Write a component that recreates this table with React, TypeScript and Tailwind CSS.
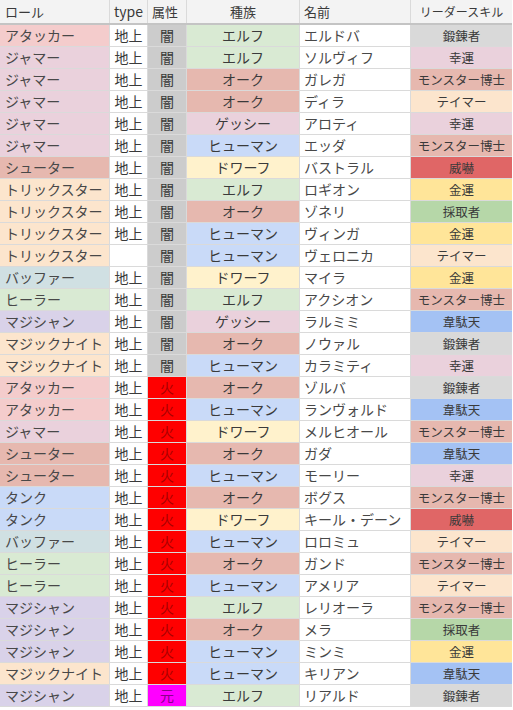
import React from "react";

const roleBg: Record<string, string> = {
  "アタッカー": "bg-[#f4cccc]",
  "ジャマー": "bg-[#ead1dc]",
  "シューター": "bg-[#e6b8af]",
  "トリックスター": "bg-[#fce5cd]",
  "バッファー": "bg-[#d0e0e3]",
  "ヒーラー": "bg-[#d9ead3]",
  "マジシャン": "bg-[#d9d2e9]",
  "マジックナイト": "bg-[#fce5cd]",
  "タンク": "bg-[#c9daf8]",
};

const attrCls: Record<string, string> = {
  "闇": "bg-[#cccccc] text-[#3a3a3a]",
  "火": "bg-[#ff0000] text-[#a80000]",
  "元": "bg-[#ff00ff] text-[#8a008a]",
};

const raceBg: Record<string, string> = {
  "エルフ": "bg-[#d9ead3]",
  "オーク": "bg-[#e6b8af]",
  "ゲッシー": "bg-[#ead1dc]",
  "ヒューマン": "bg-[#c9daf8]",
  "ドワーフ": "bg-[#fff2cc]",
};

const skillBg: Record<string, string> = {
  "鍛錬者": "bg-[#d9d9d9]",
  "幸運": "bg-[#ead1dc]",
  "モンスター博士": "bg-[#e6b8af]",
  "テイマー": "bg-[#fce5cd]",
  "威嚇": "bg-[#e06666]",
  "金運": "bg-[#ffe599]",
  "採取者": "bg-[#b6d7a8]",
  "韋駄天": "bg-[#a4c2f4]",
};

const rows: [string, string, string, string, string, string][] = [
  ["アタッカー", "地上", "闇", "エルフ", "エルドバ", "鍛錬者"],
  ["ジャマー", "地上", "闇", "エルフ", "ソルヴィフ", "幸運"],
  ["ジャマー", "地上", "闇", "オーク", "ガレガ", "モンスター博士"],
  ["ジャマー", "地上", "闇", "オーク", "ディラ", "テイマー"],
  ["ジャマー", "地上", "闇", "ゲッシー", "アロティ", "幸運"],
  ["ジャマー", "地上", "闇", "ヒューマン", "エッダ", "モンスター博士"],
  ["シューター", "地上", "闇", "ドワーフ", "バストラル", "威嚇"],
  ["トリックスター", "地上", "闇", "エルフ", "ロギオン", "金運"],
  ["トリックスター", "地上", "闇", "オーク", "ゾネリ", "採取者"],
  ["トリックスター", "地上", "闇", "ヒューマン", "ヴィンガ", "金運"],
  ["トリックスター", "", "闇", "ヒューマン", "ヴェロニカ", "テイマー"],
  ["バッファー", "地上", "闇", "ドワーフ", "マイラ", "金運"],
  ["ヒーラー", "地上", "闇", "エルフ", "アクシオン", "モンスター博士"],
  ["マジシャン", "地上", "闇", "ゲッシー", "ラルミミ", "韋駄天"],
  ["マジックナイト", "地上", "闇", "オーク", "ノウァル", "鍛錬者"],
  ["マジックナイト", "地上", "闇", "ヒューマン", "カラミティ", "幸運"],
  ["アタッカー", "地上", "火", "オーク", "ゾルバ", "鍛錬者"],
  ["アタッカー", "地上", "火", "ヒューマン", "ランヴォルド", "韋駄天"],
  ["ジャマー", "地上", "火", "ドワーフ", "メルヒオール", "モンスター博士"],
  ["シューター", "地上", "火", "オーク", "ガダ", "韋駄天"],
  ["シューター", "地上", "火", "ヒューマン", "モーリー", "幸運"],
  ["タンク", "地上", "火", "オーク", "ボグス", "モンスター博士"],
  ["タンク", "地上", "火", "ドワーフ", "キール・デーン", "威嚇"],
  ["バッファー", "地上", "火", "ヒューマン", "ロロミュ", "テイマー"],
  ["ヒーラー", "地上", "火", "オーク", "ガンド", "モンスター博士"],
  ["ヒーラー", "地上", "火", "ヒューマン", "アメリア", "テイマー"],
  ["マジシャン", "地上", "火", "エルフ", "レリオーラ", "モンスター博士"],
  ["マジシャン", "地上", "火", "オーク", "メラ", "採取者"],
  ["マジシャン", "地上", "火", "ヒューマン", "ミンミ", "金運"],
  ["マジックナイト", "地上", "火", "ヒューマン", "キリアン", "韋駄天"],
  ["マジシャン", "地上", "元", "エルフ", "リアルド", "鍛錬者"],
];

const cols = "grid grid-cols-[109px_37px_38px_112px_110px_101px] gap-x-px";

export default function App() {
  return (
    <div className="w-[513px] h-[710px] bg-white overflow-hidden font-['Noto_Sans_CJK_JP',sans-serif] text-[#3a3a3a]">
      <div className={`${cols} bg-[#dadada] w-[512px]`}>
        <div className="h-[23px] bg-[#f3f3f3] pl-[5px] text-[13px] leading-[23px] whitespace-nowrap">ロール</div>
        <div className="h-[23px] bg-[#f3f3f3] pl-[4px] text-[14px] leading-[23px] whitespace-nowrap">type</div>
        <div className="h-[23px] bg-[#f3f3f3] pl-[4px] text-[13px] leading-[23px] whitespace-nowrap">属性</div>
        <div className="h-[23px] bg-[#f3f3f3] text-center text-[13px] leading-[23px] whitespace-nowrap">種族</div>
        <div className="h-[23px] bg-[#f3f3f3] pl-[4px] text-[13px] leading-[23px] whitespace-nowrap">名前</div>
        <div className="h-[23px] bg-[#f3f3f3] text-center text-[12px] leading-[23px] whitespace-nowrap">リーダースキル</div>
      </div>
      <div className="h-[2px] w-[512px] bg-[#c4c4c4]" />
      <div className={`${cols} gap-y-px bg-[#dadada] w-[512px] pb-px`}>
        {rows.map((r, i) => (
          <React.Fragment key={i}>
            <div className={`h-[21px] ${roleBg[r[0]]} pl-[5px] text-[14px] leading-[21px] whitespace-nowrap overflow-hidden text-[#484848]`}>{r[0]}</div>
            <div className="h-[21px] bg-white text-center text-[14px] leading-[21px] whitespace-nowrap">{r[1]}</div>
            <div className={`h-[21px] ${attrCls[r[2]]} text-center text-[14px] leading-[21px]`}>{r[2]}</div>
            <div className={`h-[21px] ${raceBg[r[3]]} text-center text-[14px] leading-[21px] whitespace-nowrap`}>{r[3]}</div>
            <div className="h-[21px] bg-white pl-[4px] text-[14px] leading-[21px] whitespace-nowrap overflow-hidden text-[#484848]">{r[4]}</div>
            <div className={`h-[21px] ${skillBg[r[5]]} text-center text-[12.5px] leading-[21px] whitespace-nowrap`}>{r[5]}</div>
          </React.Fragment>
        ))}
      </div>
    </div>
  );
}
